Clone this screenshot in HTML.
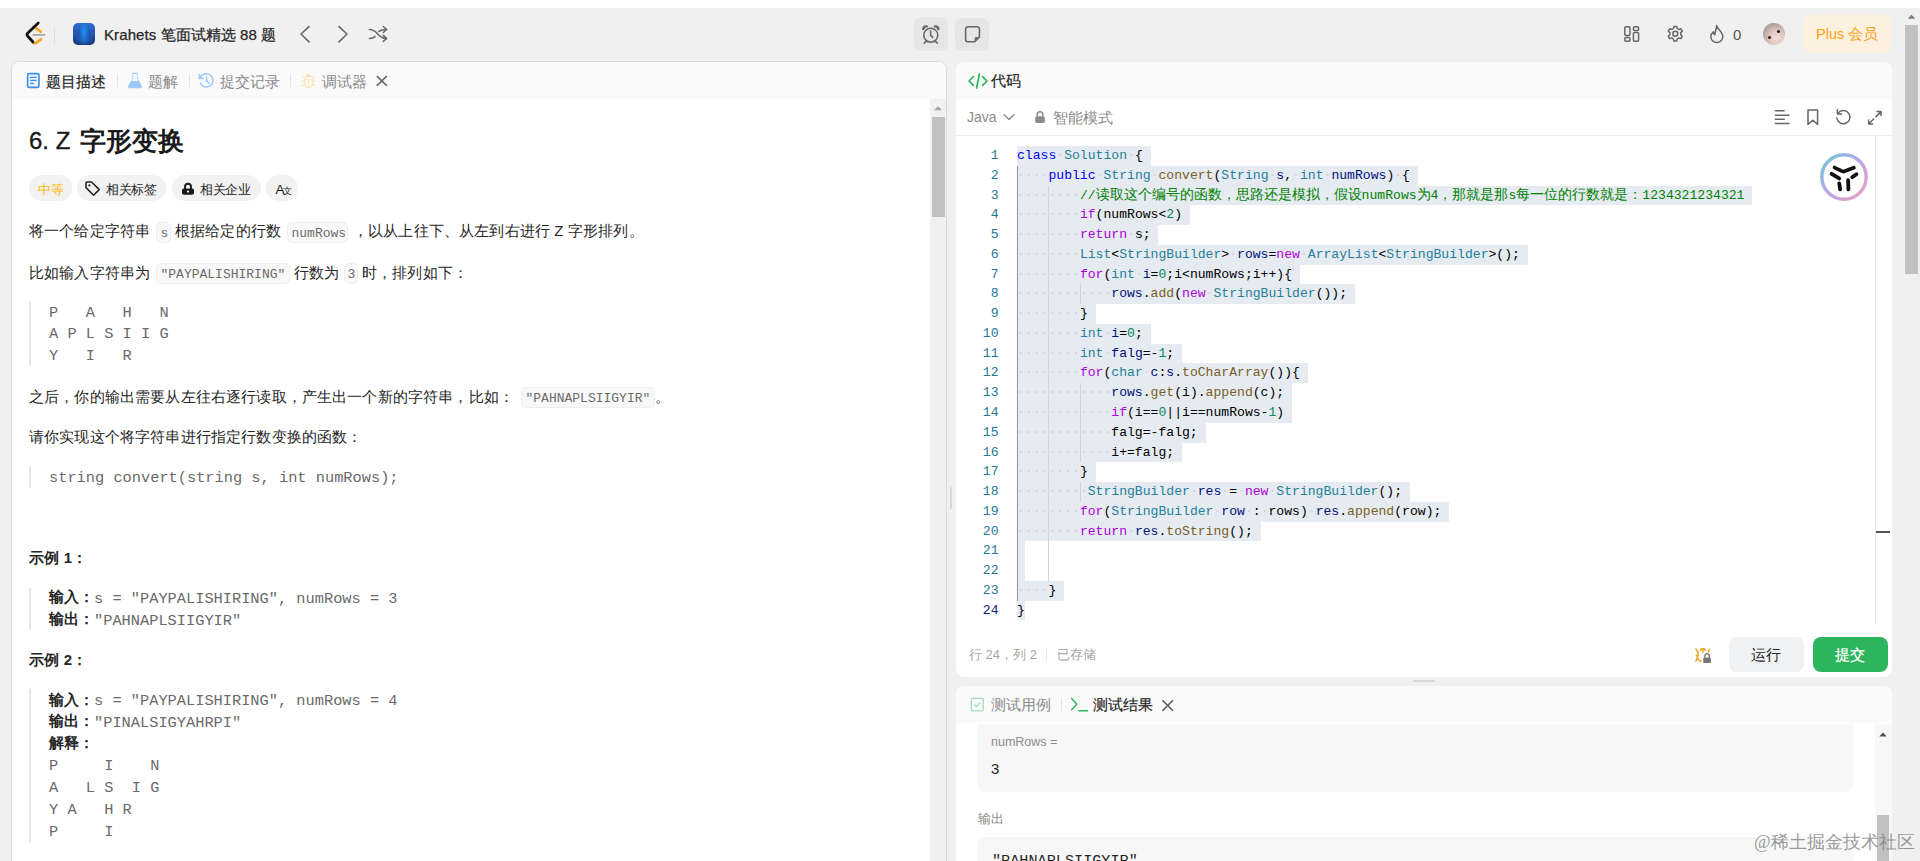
<!DOCTYPE html>
<html><head><meta charset="utf-8">
<style>
*{box-sizing:border-box;margin:0;padding:0}
html,body{width:1920px;height:861px;overflow:hidden}
body{background:#f0f0f0;font-family:"Liberation Sans",sans-serif;color:#262626;position:relative}
.abs{position:absolute}
.topstrip{left:0;top:0;width:1920px;height:8px;background:#fff}
.ico{position:absolute;overflow:visible}
.panel{position:absolute;background:#fff;border-radius:8px;overflow:hidden}
.phead{position:absolute;left:0;top:0;right:0;height:39px;background:#fafafa}
.t{position:absolute;white-space:pre;line-height:1}
.mono{font-family:"Liberation Mono",monospace}
.pill{position:absolute;height:26px;border-radius:14px;background:#f2f2f2}
.ic{position:absolute;height:20px;top:-3px;border-radius:5px;background:#f6f6f6;border:1px solid #ececec}
.pre{position:absolute;left:29px;width:2px;background:#e7e7e7}
.pt{position:absolute;left:49px;white-space:pre;font-family:"Liberation Mono",monospace;font-size:15.4px;color:#5e5e5e;line-height:21.8px}
.code{position:absolute;left:1017px;top:146px;font-family:"Liberation Mono",monospace;font-size:13.33px;line-height:19.78px;white-space:pre;color:#000}
.sel{position:absolute;background:#e5ebf1;height:19.77px}
.ln{position:absolute;left:960px;width:38.5px;text-align:right;font-family:"Liberation Mono",monospace;font-size:13.1px;line-height:19.77px;white-space:pre}
.cl{position:absolute;left:1017px;font-family:"Liberation Mono",monospace;font-size:13.1px;line-height:19.77px;white-space:pre;color:#000}
.ws{color:#ced2d7}
.cj{font-size:14px;line-height:1}
.c{display:inline-block;width:1em;font-style:normal}
.ls .c{width:calc(1em + .16px)}
.nocjk .c{-webkit-text-fill-color:transparent;-webkit-text-stroke:0;position:relative}
.nocjk .c::after{content:"";position:absolute;left:.09em;right:.09em;top:.08em;height:.84em;background:currentColor;opacity:.33}
.nocjk [style*="font-weight:bold"] .c::after{opacity:.5}
.nocjk .c.p::after{left:.12em;right:auto;width:.22em;top:.62em;height:.26em;opacity:.6}
</style></head><body>
<div class="abs topstrip"></div>

<!-- NAVBAR -->
<svg class="ico" style="left:0;top:0" width="60" height="60" viewBox="0 0 60 60">
 <path d="M33.8 26.6 L40.8 31.6" fill="none" stroke="#f2a725" stroke-width="2.7" stroke-linecap="round"/>
 <path d="M33 42.6 Q35 43.8 37 42.4 L41 39.2" fill="none" stroke="#f2a725" stroke-width="2.7" stroke-linecap="round"/>
 <path d="M38.2 23 L27.6 33.2 Q26.4 34.6 27.6 36 L33 42" fill="none" stroke="#111" stroke-width="2.7" stroke-linecap="round" stroke-linejoin="round"/>
 <path d="M33.2 34.9 H44.4" fill="none" stroke="#a8a8a8" stroke-width="1.8" stroke-linecap="round"/>
</svg>
<div class="abs" style="left:54px;top:27px;width:1px;height:18px;background:#dedede"></div>
<div class="abs" style="left:73px;top:23px;width:22px;height:22px;border-radius:5px;background:radial-gradient(ellipse 5px 11px at 50% 40%,rgba(30,150,255,.95),rgba(30,150,255,0)),radial-gradient(ellipse 10px 7px at 50% 78%,rgba(40,130,230,.6),rgba(40,130,230,0)),linear-gradient(180deg,#2c6fd0 0%,#1f52a8 55%,#14306f 100%)"></div>
<div class="t" style="left:104px;top:27px;font-size:15px;color:#262626;letter-spacing:.1px;-webkit-text-stroke:.25px #262626">Krahets <i class="c">笔</i><i class="c">面</i><i class="c">试</i><i class="c">精</i><i class="c">选</i> 88 <i class="c">题</i></div>
<svg class="ico" style="left:296px;top:22px" width="20" height="24" viewBox="0 0 20 24">
 <path d="M13 4.6 L5 12 L13 19.9" fill="none" stroke="#666" stroke-width="1.6" stroke-linecap="round" stroke-linejoin="round"/>
</svg>
<svg class="ico" style="left:334px;top:22px" width="20" height="24" viewBox="0 0 20 24">
 <path d="M5 4.6 L13 12 L5 19.9" fill="none" stroke="#666" stroke-width="1.6" stroke-linecap="round" stroke-linejoin="round"/>
</svg>
<svg class="ico" style="left:366px;top:22px" width="24" height="24" viewBox="0 0 24 24">
 <path d="M3.4 7.4 C7 7.4 9 8.6 11.5 11.75 C14 14.9 16 16.4 20.4 16.4" fill="none" stroke="#666" stroke-width="1.5" stroke-linecap="round"/>
 <path d="M3.4 16.4 C5.6 16.4 7.6 15.9 9 14.6 M12.9 9.4 C14.6 8 16.4 7.4 20.4 7.4" fill="none" stroke="#666" stroke-width="1.5" stroke-linecap="round"/>
 <path d="M17.3 4.5 L20.7 7.5 L17.3 10.5 M17.3 13.4 L20.7 16.4 L17.3 19.4" fill="none" stroke="#666" stroke-width="1.5" stroke-linecap="round" stroke-linejoin="round"/>
</svg>
<!-- timer + note -->
<div class="abs" style="left:914px;top:17px;width:34px;height:34px;border-radius:7px;background:#e6e6e6"></div>
<svg class="ico" style="left:918px;top:22px" width="26" height="24" viewBox="0 0 26 24">
 <circle cx="12.8" cy="13.2" r="7" fill="none" stroke="#666" stroke-width="1.6"/>
 <path d="M12.6 9 V13.2 L14.6 15.4" fill="none" stroke="#666" stroke-width="1.6" stroke-linecap="round" stroke-linejoin="round"/>
 <path d="M5.2 7 A3.2 3.2 0 0 1 8.8 4.4 M20.4 7 A3.2 3.2 0 0 0 16.8 4.4" fill="none" stroke="#666" stroke-width="2.4" stroke-linecap="round"/>
 <path d="M8.2 19.4 L6.2 21.2 M17.4 19.4 L19.4 21.2" stroke="#666" stroke-width="1.6" stroke-linecap="round"/>
</svg>
<div class="abs" style="left:955px;top:18px;width:34px;height:33px;border-radius:7px;background:#e6e6e6"></div>
<svg class="ico" style="left:962px;top:23px" width="21" height="22" viewBox="0 0 21 22">
 <path d="M5.8 3.8 H15.2 A2.2 2.2 0 0 1 17.4 6 V14 L12.6 18.8 H5.8 A2.2 2.2 0 0 1 3.6 16.6 V6 A2.2 2.2 0 0 1 5.8 3.8 Z" fill="none" stroke="#666" stroke-width="1.6" stroke-linejoin="round"/>
 <path d="M17.4 14 H14.4 A1.8 1.8 0 0 0 12.6 15.8 V18.8 Z" fill="#666"/>
</svg>
<!-- right nav icons -->
<svg class="ico" style="left:1621px;top:23px" width="22" height="22" viewBox="0 0 22 22">
 <rect x="3.8" y="3.8" width="5.2" height="8.6" rx="1.2" fill="none" stroke="#666" stroke-width="1.5"/>
 <rect x="3.8" y="14.6" width="5.2" height="3.6" rx="1.2" fill="none" stroke="#666" stroke-width="1.5"/>
 <rect x="12.4" y="3.8" width="5.2" height="3.6" rx="1.2" fill="none" stroke="#666" stroke-width="1.5"/>
 <rect x="12.4" y="9.6" width="5.2" height="8.6" rx="1.2" fill="none" stroke="#666" stroke-width="1.5"/>
</svg>
<svg class="ico" style="left:1664px;top:23px" width="22" height="22" viewBox="0 0 22 22">
 <g transform="translate(11.3 11) scale(0.78) translate(-12 -12)">
 <path d="M10.2 2.4 H13.8 L14.5 5.1 Q15.6 5.5 16.6 6.2 L19.2 5.3 L21 8.4 L18.9 10.3 Q19.1 11.5 18.9 12.9 L21 14.8 L19.2 17.9 L16.6 17 Q15.6 17.8 14.5 18.2 L13.8 20.9 H10.2 L9.5 18.2 Q8.4 17.8 7.4 17 L4.8 17.9 L3 14.8 L5.1 12.9 Q4.9 11.6 5.1 10.3 L3 8.4 L4.8 5.3 L7.4 6.2 Q8.4 5.5 9.5 5.1 Z" fill="none" stroke="#666" stroke-width="1.9" stroke-linejoin="round"/>
 <circle cx="12" cy="11.6" r="3.2" fill="none" stroke="#666" stroke-width="1.9"/>
 </g>
</svg>
<svg class="ico" style="left:1706px;top:23px" width="22" height="22" viewBox="0 0 22 22">
 <path d="M10.6 2.6 C11 6 16.8 8.6 16.8 13.6 A6 6 0 0 1 4.8 13.6 C4.8 11 6.4 9.6 7.4 8.8 C7.4 10.4 8 11.4 8.8 11.8 C9 8.4 10.6 5.6 10.6 2.6 Z" fill="none" stroke="#666" stroke-width="1.5" stroke-linejoin="round"/>
</svg>
<div class="t" style="left:1733px;top:27px;font-size:15px;color:#555">0</div>
<div class="abs" style="left:1763px;top:23px;width:22px;height:22px;border-radius:50%;background:radial-gradient(circle at 62% 68%,#f2dcd6 0%,#e2c8c0 35%,#a89c94 75%,#8e857f 100%);overflow:hidden">
 <div class="abs" style="left:5px;top:13px;width:3px;height:3px;border-radius:50%;background:#2a1a1a"></div>
 <div class="abs" style="left:14px;top:7px;width:3px;height:3px;border-radius:50%;background:#2a1a1a"></div>
</div>
<div class="abs" style="left:1803px;top:15px;width:88px;height:38px;border-radius:7px;background:#fcf0df"></div>
<div class="t" style="left:1816px;top:26.5px;font-size:14.5px;color:#ffa116">Plus <i class="c">会</i><i class="c">员</i></div>

<!-- LEFT PANEL -->
<div class="panel" style="left:11px;top:61px;width:936px;height:820px;border:1px solid #d9d9d9">
  <div class="phead" style="height:37px"></div>
</div>
<!-- left tabs -->
<svg class="ico" style="left:26px;top:72px" width="15" height="17" viewBox="0 0 15 17">
 <rect x="1.6" y="1.6" width="11.4" height="13.8" rx="1.6" fill="#e8f3ff" stroke="#3b8df0" stroke-width="1.6"/>
 <path d="M4.6 5.4 H10 M4.6 8.4 H10 M4.6 11.4 H7.4" stroke="#3b8df0" stroke-width="1.4" stroke-linecap="round"/>
</svg>
<div class="t" style="left:46px;top:74px;font-size:15px;color:#262626;-webkit-text-stroke:.2px #262626"><i class="c">题</i><i class="c">目</i><i class="c">描</i><i class="c">述</i></div>
<div class="abs" style="left:117px;top:74px;width:1px;height:13px;background:#e4e4e4"></div>
<svg class="ico" style="left:127px;top:72px" width="16" height="17" viewBox="0 0 16 17">
 <path d="M5.4 1.4 H10.6 M6.2 1.4 V6.2 L1.8 14 A1.4 1.4 0 0 0 3 15.6 H13 A1.4 1.4 0 0 0 14.2 14 L9.8 6.2 V1.4" fill="#9ccaf8" stroke="#9ccaf8" stroke-width="1.4" stroke-linejoin="round"/>
 <path d="M6.2 2 V6.2 L4.6 9 H11.4 L9.8 6.2 V2 Z" fill="#fafafa"/>
</svg>
<div class="t" style="left:148px;top:74px;font-size:15px;color:#8a8a8a"><i class="c">题</i><i class="c">解</i></div>
<div class="abs" style="left:189px;top:74px;width:1px;height:13px;background:#e4e4e4"></div>
<svg class="ico" style="left:198px;top:72px" width="17" height="17" viewBox="0 0 17 17">
 <path d="M2.6 5.2 A6.6 6.6 0 1 1 2.4 11" fill="none" stroke="#9ccaf8" stroke-width="1.6" stroke-linecap="round"/>
 <path d="M1.4 2.6 V6.4 H5.2" fill="none" stroke="#9ccaf8" stroke-width="1.6" stroke-linecap="round" stroke-linejoin="round"/>
 <path d="M8.6 5 V8.8 L11 11" fill="none" stroke="#9ccaf8" stroke-width="1.6" stroke-linecap="round"/>
</svg>
<div class="t" style="left:220px;top:74px;font-size:15px;color:#8a8a8a"><i class="c">提</i><i class="c">交</i><i class="c">记</i><i class="c">录</i></div>
<div class="abs" style="left:290px;top:74px;width:1px;height:13px;background:#e4e4e4"></div>
<svg class="ico" style="left:300px;top:72px" width="17" height="17" viewBox="0 0 17 17">
 <path d="M5.6 5.2 A2.9 2.9 0 0 1 11.4 5.2 Z" fill="#fbe2b4"/>
 <path d="M4.6 7.6 H12.4 V11.4 A3.9 3.9 0 0 1 4.6 11.4 Z" fill="none" stroke="#fbe6bf" stroke-width="1.4"/>
 <path d="M1.8 9.4 H4 M13 9.4 H15.2 M2 13.8 L4.2 12.6 M15 13.8 L12.8 12.6 M2.8 4.4 L4.6 6.4 M14.2 4.4 L12.4 6.4 M8.5 8 V14" stroke="#fbe6bf" stroke-width="1.3" stroke-linecap="round"/>
</svg>
<div class="t" style="left:322px;top:74px;font-size:15px;color:#8a8a8a"><i class="c">调</i><i class="c">试</i><i class="c">器</i></div>
<svg class="ico" style="left:374px;top:73px" width="16" height="16" viewBox="0 0 16 16">
 <path d="M3.2 3.4 L12.4 12.4 M12.4 3.4 L3.2 12.4" stroke="#666" stroke-width="1.5" stroke-linecap="round"/>
</svg>

<!-- left scrollbar -->
<div class="abs" style="left:930px;top:99px;width:16px;height:762px;background:#f0f0f0"></div>
<svg class="ico" style="left:930px;top:103px" width="16" height="10" viewBox="0 0 16 10"><path d="M4 7.2 L8 3.2 L12 7.2 Z" fill="#a3a3a3"/></svg>
<div class="abs" style="left:932px;top:117px;width:13px;height:100px;background:#c1c1c1"></div>

<!-- title -->
<div class="t" style="left:29px;top:129px;font-size:24px;color:#1a1a1a;-webkit-text-stroke:.35px #1a1a1a">6. Z</div>
<div class="t" style="left:80px;top:128px;font-size:26px;font-weight:bold;color:#1a1a1a"><i class="c">字</i><i class="c">形</i><i class="c">变</i><i class="c">换</i></div>
<!-- tags -->
<div class="pill" style="left:29px;top:175px;width:43px"></div>
<div class="t" style="left:38px;top:184px;font-size:12.5px;color:#ffb800"><i class="c">中</i><i class="c">等</i></div>
<div class="pill" style="left:77px;top:175px;width:89px"></div>
<svg class="ico" style="left:84px;top:180px" width="18" height="17" viewBox="0 0 18 17">
 <path d="M2 2.6 V7.6 L9.6 15.2 L15.2 9.6 L7.6 2 H2.6 Z" fill="none" stroke="#262626" stroke-width="1.6" stroke-linejoin="round"/>
 <circle cx="5.4" cy="5.4" r="1.1" fill="#262626"/>
</svg>
<div class="t" style="left:106px;top:184px;font-size:12.5px;color:#262626"><i class="c">相</i><i class="c">关</i><i class="c">标</i><i class="c">签</i></div>
<div class="pill" style="left:172px;top:175px;width:89px"></div>
<svg class="ico" style="left:181px;top:180px" width="14" height="17" viewBox="0 0 14 17">
 <path d="M4 9 V6.8 A3 3 0 0 1 10 6.8 V9" fill="none" stroke="#1a1a1a" stroke-width="1.9"/>
 <rect x="1" y="8.4" width="12" height="6.4" rx="1.8" fill="#1a1a1a"/>
 <circle cx="7" cy="11.6" r="1.1" fill="#f2f2f2"/>
</svg>
<div class="t" style="left:200px;top:184px;font-size:12.5px;color:#262626"><i class="c">相</i><i class="c">关</i><i class="c">企</i><i class="c">业</i></div>
<div class="pill" style="left:266px;top:175px;width:32px"></div>
<div class="t" style="left:275.5px;top:183px;font-size:13.5px;color:#1a1a1a;letter-spacing:-1.5px">A<span style="font-size:9px;position:relative;top:0"><i class="c">文</i></span></div>

<!-- paragraphs -->
<div class="t ls" style="left:29px;top:223.2px;font-size:15px;color:#262626;font-weight:normal;letter-spacing:.16px;"><i class="c">将</i><i class="c">一</i><i class="c">个</i><i class="c">给</i><i class="c">定</i><i class="c">字</i><i class="c">符</i><i class="c">串</i></div>
<div class="abs" style="left:156px;top:222px;width:15px;height:21px;border-radius:5px;background:#f8f8f8;border:1px solid #eeeeee"></div>
<div class="t" style="left:160.5px;top:226.5px;font-size:13px;color:#6b6b6b;font-weight:normal;font-family:'Liberation Mono',monospace;">s</div>
<div class="t ls" style="left:175px;top:223.2px;font-size:15px;color:#262626;font-weight:normal;letter-spacing:.16px;"><i class="c">根</i><i class="c">据</i><i class="c">给</i><i class="c">定</i><i class="c">的</i><i class="c">行</i><i class="c">数</i></div>
<div class="abs" style="left:287px;top:222px;width:61px;height:21px;border-radius:5px;background:#f8f8f8;border:1px solid #eeeeee"></div>
<div class="t" style="left:291.5px;top:226.5px;font-size:13px;color:#6b6b6b;font-weight:normal;font-family:'Liberation Mono',monospace;">numRows</div>
<div class="t ls" style="left:353px;top:223.2px;font-size:15px;color:#262626;font-weight:normal;letter-spacing:.16px;"><i class="c p">，</i><i class="c">以</i><i class="c">从</i><i class="c">上</i><i class="c">往</i><i class="c">下</i><i class="c p">、</i><i class="c">从</i><i class="c">左</i><i class="c">到</i><i class="c">右</i><i class="c">进</i><i class="c">行</i> Z <i class="c">字</i><i class="c">形</i><i class="c">排</i><i class="c">列</i><i class="c p">。</i></div>
<div class="t ls" style="left:29px;top:264.7px;font-size:15px;color:#262626;font-weight:normal;letter-spacing:.16px;"><i class="c">比</i><i class="c">如</i><i class="c">输</i><i class="c">入</i><i class="c">字</i><i class="c">符</i><i class="c">串</i><i class="c">为</i></div>
<div class="abs" style="left:156px;top:263px;width:134px;height:21px;border-radius:5px;background:#f8f8f8;border:1px solid #eeeeee"></div>
<div class="t" style="left:160.5px;top:268.0px;font-size:13px;color:#6b6b6b;font-weight:normal;font-family:'Liberation Mono',monospace;">"PAYPALISHIRING"</div>
<div class="t ls" style="left:293.5px;top:264.7px;font-size:15px;color:#262626;font-weight:normal;letter-spacing:.16px;"><i class="c">行</i><i class="c">数</i><i class="c">为</i></div>
<div class="abs" style="left:344px;top:263px;width:14px;height:21px;border-radius:5px;background:#f8f8f8;border:1px solid #eeeeee"></div>
<div class="t" style="left:347.5px;top:268.0px;font-size:13px;color:#6b6b6b;font-weight:normal;font-family:'Liberation Mono',monospace;">3</div>
<div class="t ls" style="left:362px;top:264.7px;font-size:15px;color:#262626;font-weight:normal;letter-spacing:.16px;"><i class="c">时</i><i class="c p">，</i><i class="c">排</i><i class="c">列</i><i class="c">如</i><i class="c">下</i><i class="c p">：</i></div>
<div class="pre" style="top:302px;height:64px"></div>
<div class="t" style="left:49px;top:305.5px;font-size:15.33px;color:#6a6a6a;font-weight:normal;font-family:'Liberation Mono',monospace;">P   A   H   N</div>
<div class="t" style="left:49px;top:327.2px;font-size:15.33px;color:#6a6a6a;font-weight:normal;font-family:'Liberation Mono',monospace;">A P L S I I G</div>
<div class="t" style="left:49px;top:349.0px;font-size:15.33px;color:#6a6a6a;font-weight:normal;font-family:'Liberation Mono',monospace;">Y   I   R</div>
<div class="t ls" style="left:29px;top:388.7px;font-size:15px;color:#262626;font-weight:normal;letter-spacing:.16px;"><i class="c">之</i><i class="c">后</i><i class="c p">，</i><i class="c">你</i><i class="c">的</i><i class="c">输</i><i class="c">出</i><i class="c">需</i><i class="c">要</i><i class="c">从</i><i class="c">左</i><i class="c">往</i><i class="c">右</i><i class="c">逐</i><i class="c">行</i><i class="c">读</i><i class="c">取</i><i class="c p">，</i><i class="c">产</i><i class="c">生</i><i class="c">出</i><i class="c">一</i><i class="c">个</i><i class="c">新</i><i class="c">的</i><i class="c">字</i><i class="c">符</i><i class="c">串</i><i class="c p">，</i><i class="c">比</i><i class="c">如</i><i class="c p">：</i></div>
<div class="abs" style="left:521px;top:387px;width:134px;height:21px;border-radius:5px;background:#f8f8f8;border:1px solid #eeeeee"></div>
<div class="t" style="left:525.5px;top:392.0px;font-size:13px;color:#6b6b6b;font-weight:normal;font-family:'Liberation Mono',monospace;">"PAHNAPLSIIGYIR"</div>
<div class="t ls" style="left:655px;top:388.7px;font-size:15px;color:#262626;font-weight:normal;letter-spacing:.16px;"><i class="c p">。</i></div>
<div class="t ls" style="left:29px;top:429.4px;font-size:15px;color:#262626;font-weight:normal;letter-spacing:.16px;"><i class="c">请</i><i class="c">你</i><i class="c">实</i><i class="c">现</i><i class="c">这</i><i class="c">个</i><i class="c">将</i><i class="c">字</i><i class="c">符</i><i class="c">串</i><i class="c">进</i><i class="c">行</i><i class="c">指</i><i class="c">定</i><i class="c">行</i><i class="c">数</i><i class="c">变</i><i class="c">换</i><i class="c">的</i><i class="c">函</i><i class="c">数</i><i class="c p">：</i></div>
<div class="pre" style="top:466px;height:22px"></div>
<div class="t" style="left:49px;top:471.0px;font-size:15.33px;color:#6a6a6a;font-weight:normal;font-family:'Liberation Mono',monospace;">string convert(string s, int numRows);</div>
<div class="t ls" style="left:29px;top:550.3px;font-size:15px;color:#262626;font-weight:bold;letter-spacing:.16px;"><i class="c">示</i><i class="c">例</i> 1<i class="c p">：</i></div>
<div class="pre" style="top:588px;height:42px"></div>
<div class="t ls" style="left:49px;top:589.4px;font-size:15px;color:#262626;font-weight:bold;letter-spacing:.16px;"><i class="c">输</i><i class="c">入</i><i class="c p">：</i></div>
<div class="t" style="left:94px;top:591.7px;font-size:15.33px;color:#6a6a6a;font-weight:normal;font-family:'Liberation Mono',monospace;">s = "PAYPALISHIRING", numRows = 3</div>
<div class="t ls" style="left:49px;top:611.3px;font-size:15px;color:#262626;font-weight:bold;letter-spacing:.16px;"><i class="c">输</i><i class="c">出</i><i class="c p">：</i></div>
<div class="t" style="left:94px;top:613.6px;font-size:15.33px;color:#6a6a6a;font-weight:normal;font-family:'Liberation Mono',monospace;">"PAHNAPLSIIGYIR"</div>
<div class="t ls" style="left:29px;top:652.2px;font-size:15px;color:#262626;font-weight:bold;letter-spacing:.16px;"><i class="c">示</i><i class="c">例</i> 2<i class="c p">：</i></div>
<div class="pre" style="top:689px;height:153px"></div>
<div class="t ls" style="left:49px;top:691.7px;font-size:15px;color:#262626;font-weight:bold;letter-spacing:.16px;"><i class="c">输</i><i class="c">入</i><i class="c p">：</i></div>
<div class="t" style="left:94px;top:694.0px;font-size:15.33px;color:#6a6a6a;font-weight:normal;font-family:'Liberation Mono',monospace;">s = "PAYPALISHIRING", numRows = 4</div>
<div class="t ls" style="left:49px;top:713.3px;font-size:15px;color:#262626;font-weight:bold;letter-spacing:.16px;"><i class="c">输</i><i class="c">出</i><i class="c p">：</i></div>
<div class="t" style="left:94px;top:715.6px;font-size:15.33px;color:#6a6a6a;font-weight:normal;font-family:'Liberation Mono',monospace;">"PINALSIGYAHRPI"</div>
<div class="t ls" style="left:49px;top:734.9px;font-size:15px;color:#262626;font-weight:bold;letter-spacing:.16px;"><i class="c">解</i><i class="c">释</i><i class="c p">：</i></div>
<div class="t" style="left:49px;top:759.2px;font-size:15.33px;color:#6a6a6a;font-weight:normal;font-family:'Liberation Mono',monospace;">P     I    N</div>
<div class="t" style="left:49px;top:781.1px;font-size:15.33px;color:#6a6a6a;font-weight:normal;font-family:'Liberation Mono',monospace;">A   L S  I G</div>
<div class="t" style="left:49px;top:803.0px;font-size:15.33px;color:#6a6a6a;font-weight:normal;font-family:'Liberation Mono',monospace;">Y A   H R</div>
<div class="t" style="left:49px;top:824.9px;font-size:15.33px;color:#6a6a6a;font-weight:normal;font-family:'Liberation Mono',monospace;">P     I</div>

<!-- RIGHT TOP PANEL -->
<div class="panel" style="left:956px;top:62px;width:936px;height:615px">
  <div class="phead" style="height:37px"></div>
  <div class="abs" style="left:0;top:73px;width:936px;height:1px;background:#ededed"></div>
</div>
<svg class="ico" style="left:966px;top:72px" width="24" height="18" viewBox="0 0 24 18">
 <path d="M7.4 4.6 L3 9 L7.4 13.4 M16.6 4.6 L21 9 L16.6 13.4" fill="none" stroke="#2db55d" stroke-width="1.7" stroke-linecap="round" stroke-linejoin="round"/>
 <path d="M13.4 2 L10.6 16" stroke="#2db55d" stroke-width="1.7" stroke-linecap="round"/>
</svg>
<div class="t" style="left:991px;top:73px;font-size:15px;color:#262626;-webkit-text-stroke:.2px #262626"><i class="c">代</i><i class="c">码</i></div>
<div class="t" style="left:967px;top:110px;font-size:14px;color:#8c8c8c">Java</div>
<svg class="ico" style="left:1002px;top:112px" width="14" height="10" viewBox="0 0 14 10"><path d="M2 2.8 L7 7.6 L12 2.8" fill="none" stroke="#8c8c8c" stroke-width="1.4" stroke-linecap="round" stroke-linejoin="round"/></svg>
<svg class="ico" style="left:1034px;top:110px" width="12" height="14" viewBox="0 0 12 14">
 <path d="M3.2 6.4 V4.6 A2.8 2.8 0 0 1 8.8 4.6 V6.4" fill="none" stroke="#8c8c8c" stroke-width="1.6"/>
 <rect x="1.2" y="6.2" width="9.6" height="6.8" rx="1.6" fill="#8c8c8c"/>
</svg>
<div class="t" style="left:1053px;top:110px;font-size:15px;color:#8c8c8c"><i class="c">智</i><i class="c">能</i><i class="c">模</i><i class="c">式</i></div>
<svg class="ico" style="left:1772px;top:107px" width="20" height="20" viewBox="0 0 20 20">
 <path d="M3.4 3.8 H12.2 M3.4 8.2 H17 M3.4 12.3 H12.2 M3.4 16.4 H17" stroke="#666" stroke-width="1.5" stroke-linecap="round"/>
</svg>
<svg class="ico" style="left:1803px;top:107px" width="20" height="20" viewBox="0 0 20 20">
 <path d="M5 3 H14.6 V17.4 L9.8 13.2 L5 17.4 Z" fill="none" stroke="#666" stroke-width="1.5" stroke-linejoin="round"/>
</svg>
<svg class="ico" style="left:1833px;top:107px" width="20" height="20" viewBox="0 0 20 20">
 <path d="M5.2 6 A6.6 6.6 0 1 1 3.8 11" fill="none" stroke="#666" stroke-width="1.5" stroke-linecap="round"/>
 <path d="M4.4 2.8 V7 H8.6" fill="none" stroke="#666" stroke-width="1.5" stroke-linecap="round" stroke-linejoin="round"/>
</svg>
<svg class="ico" style="left:1865px;top:108px" width="20" height="20" viewBox="0 0 20 20">
 <path d="M11 8.6 L16 3.6 M12 3.6 H16 V7.6 M8.6 11 L3.6 16 M3.6 12 V16 H7.6" fill="none" stroke="#666" stroke-width="1.5" stroke-linecap="round" stroke-linejoin="round"/>
</svg>
<!-- editor -->
<div class="abs" style="left:1875px;top:136px;width:1px;height:489px;background:#e6e6e6"></div>
<div class="abs" style="left:1876px;top:531px;width:14px;height:2px;background:#555"></div>
<!-- CODE START -->
<div class="sel" style="left:1017px;top:146.00px;width:133.6px"></div>
<div class="sel" style="left:1017px;top:165.77px;width:400.7px"></div>
<div class="sel" style="left:1017px;top:185.54px;width:735.3px"></div>
<div class="sel" style="left:1017px;top:205.31px;width:172.9px"></div>
<div class="sel" style="left:1017px;top:225.08px;width:141.4px"></div>
<div class="sel" style="left:1017px;top:244.85px;width:510.7px"></div>
<div class="sel" style="left:1017px;top:264.62px;width:282.9px"></div>
<div class="sel" style="left:1017px;top:284.39px;width:337.9px"></div>
<div class="sel" style="left:1017px;top:304.16px;width:78.6px"></div>
<div class="sel" style="left:1017px;top:323.93px;width:133.6px"></div>
<div class="sel" style="left:1017px;top:343.70px;width:165.0px"></div>
<div class="sel" style="left:1017px;top:363.47px;width:290.7px"></div>
<div class="sel" style="left:1017px;top:383.24px;width:275.0px"></div>
<div class="sel" style="left:1017px;top:403.01px;width:275.0px"></div>
<div class="sel" style="left:1017px;top:422.78px;width:188.6px"></div>
<div class="sel" style="left:1017px;top:442.55px;width:165.0px"></div>
<div class="sel" style="left:1017px;top:462.32px;width:78.6px"></div>
<div class="sel" style="left:1017px;top:482.09px;width:392.9px"></div>
<div class="sel" style="left:1017px;top:501.86px;width:432.1px"></div>
<div class="sel" style="left:1017px;top:521.63px;width:243.6px"></div>
<div class="sel" style="left:1017px;top:541.40px;width:7.9px"></div>
<div class="sel" style="left:1017px;top:561.17px;width:7.9px"></div>
<div class="sel" style="left:1017px;top:580.94px;width:47.1px"></div>
<div class="sel" style="left:1017px;top:600.71px;width:7.9px"></div>
<div class="abs" style="left:1017.0px;top:165.77px;width:1px;height:434.94px;background:#939393"></div>
<div class="abs" style="left:1048.4px;top:185.54px;width:1px;height:395.40px;background:#d3d3d3"></div>
<div class="abs" style="left:1079.9px;top:284.39px;width:1px;height:19.77px;background:#d3d3d3"></div>
<div class="abs" style="left:1079.9px;top:383.24px;width:1px;height:79.08px;background:#d3d3d3"></div>
<div class="abs" style="left:1079.9px;top:482.09px;width:1px;height:19.77px;background:#d3d3d3"></div>
<div class="ln" style="top:146.00px;color:#237893">1</div>
<div class="ln" style="top:165.77px;color:#237893">2</div>
<div class="ln" style="top:185.54px;color:#237893">3</div>
<div class="ln" style="top:205.31px;color:#237893">4</div>
<div class="ln" style="top:225.08px;color:#237893">5</div>
<div class="ln" style="top:244.85px;color:#237893">6</div>
<div class="ln" style="top:264.62px;color:#237893">7</div>
<div class="ln" style="top:284.39px;color:#237893">8</div>
<div class="ln" style="top:304.16px;color:#237893">9</div>
<div class="ln" style="top:323.93px;color:#237893">10</div>
<div class="ln" style="top:343.70px;color:#237893">11</div>
<div class="ln" style="top:363.47px;color:#237893">12</div>
<div class="ln" style="top:383.24px;color:#237893">13</div>
<div class="ln" style="top:403.01px;color:#237893">14</div>
<div class="ln" style="top:422.78px;color:#237893">15</div>
<div class="ln" style="top:442.55px;color:#237893">16</div>
<div class="ln" style="top:462.32px;color:#237893">17</div>
<div class="ln" style="top:482.09px;color:#237893">18</div>
<div class="ln" style="top:501.86px;color:#237893">19</div>
<div class="ln" style="top:521.63px;color:#237893">20</div>
<div class="ln" style="top:541.40px;color:#237893">21</div>
<div class="ln" style="top:561.17px;color:#237893">22</div>
<div class="ln" style="top:580.94px;color:#237893">23</div>
<div class="ln" style="top:600.71px;color:#0b216f">24</div>
<div class="cl" style="top:146.00px"><span style="color:#0000ff">class</span><span class="ws">·</span><span style="color:#267f99">Solution</span><span class="ws">·</span><span style="color:#000000">{</span></div>
<div class="cl" style="top:165.77px"><span class="ws">····</span><span style="color:#0000ff">public</span><span class="ws">·</span><span style="color:#267f99">String</span><span class="ws">·</span><span style="color:#795e26">convert</span><span style="color:#000000">(</span><span style="color:#267f99">String</span><span class="ws">·</span><span style="color:#001080">s</span><span style="color:#000000">,</span><span class="ws">·</span><span style="color:#267f99">int</span><span class="ws">·</span><span style="color:#001080">numRows</span><span style="color:#000000">)</span><span class="ws">·</span><span style="color:#000000">{</span></div>
<div class="cl" style="top:185.54px"><span class="ws">········</span><span style="color:#008000">//<span class="cj"><i class="c">读</i><i class="c">取</i><i class="c">这</i><i class="c">个</i><i class="c">编</i><i class="c">号</i><i class="c">的</i><i class="c">函</i><i class="c">数</i><i class="c p">，</i><i class="c">思</i><i class="c">路</i><i class="c">还</i><i class="c">是</i><i class="c">模</i><i class="c">拟</i><i class="c p">，</i><i class="c">假</i><i class="c">设</i></span>numRows<span class="cj"><i class="c">为</i></span>4<span class="cj"><i class="c p">，</i><i class="c">那</i><i class="c">就</i><i class="c">是</i><i class="c">那</i></span>s<span class="cj"><i class="c">每</i><i class="c">一</i><i class="c">位</i><i class="c">的</i><i class="c">行</i><i class="c">数</i><i class="c">就</i><i class="c">是</i><i class="c p">：</i></span>1234321234321</span></div>
<div class="cl" style="top:205.31px"><span class="ws">········</span><span style="color:#af00db">if</span><span style="color:#000000">(numRows&lt;</span><span style="color:#098658">2</span><span style="color:#000000">)</span></div>
<div class="cl" style="top:225.08px"><span class="ws">········</span><span style="color:#af00db">return</span><span class="ws">·</span><span style="color:#000000">s;</span></div>
<div class="cl" style="top:244.85px"><span class="ws">········</span><span style="color:#267f99">List</span><span style="color:#000000">&lt;</span><span style="color:#267f99">StringBuilder</span><span style="color:#000000">&gt;</span><span class="ws">·</span><span style="color:#001080">rows</span><span style="color:#000000">=</span><span style="color:#af00db">new</span><span class="ws">·</span><span style="color:#267f99">ArrayList</span><span style="color:#000000">&lt;</span><span style="color:#267f99">StringBuilder</span><span style="color:#000000">&gt;();</span></div>
<div class="cl" style="top:264.62px"><span class="ws">········</span><span style="color:#af00db">for</span><span style="color:#000000">(</span><span style="color:#267f99">int</span><span class="ws">·</span><span style="color:#001080">i</span><span style="color:#000000">=</span><span style="color:#098658">0</span><span style="color:#000000">;i&lt;numRows;i++){</span></div>
<div class="cl" style="top:284.39px"><span class="ws">············</span><span style="color:#001080">rows</span><span style="color:#000000">.</span><span style="color:#795e26">add</span><span style="color:#000000">(</span><span style="color:#af00db">new</span><span class="ws">·</span><span style="color:#267f99">StringBuilder</span><span style="color:#000000">());</span></div>
<div class="cl" style="top:304.16px"><span class="ws">········</span><span style="color:#000000">}</span></div>
<div class="cl" style="top:323.93px"><span class="ws">········</span><span style="color:#267f99">int</span><span class="ws">·</span><span style="color:#001080">i</span><span style="color:#000000">=</span><span style="color:#098658">0</span><span style="color:#000000">;</span></div>
<div class="cl" style="top:343.70px"><span class="ws">········</span><span style="color:#267f99">int</span><span class="ws">·</span><span style="color:#001080">falg</span><span style="color:#000000">=-</span><span style="color:#098658">1</span><span style="color:#000000">;</span></div>
<div class="cl" style="top:363.47px"><span class="ws">········</span><span style="color:#af00db">for</span><span style="color:#000000">(</span><span style="color:#267f99">char</span><span class="ws">·</span><span style="color:#001080">c</span><span style="color:#000000">:</span><span style="color:#001080">s</span><span style="color:#000000">.</span><span style="color:#795e26">toCharArray</span><span style="color:#000000">()){</span></div>
<div class="cl" style="top:383.24px"><span class="ws">············</span><span style="color:#001080">rows</span><span style="color:#000000">.</span><span style="color:#795e26">get</span><span style="color:#000000">(i).</span><span style="color:#795e26">append</span><span style="color:#000000">(c);</span></div>
<div class="cl" style="top:403.01px"><span class="ws">············</span><span style="color:#af00db">if</span><span style="color:#000000">(i==</span><span style="color:#098658">0</span><span style="color:#000000">||i==numRows-</span><span style="color:#098658">1</span><span style="color:#000000">)</span></div>
<div class="cl" style="top:422.78px"><span class="ws">············</span><span style="color:#000000">falg=-falg;</span></div>
<div class="cl" style="top:442.55px"><span class="ws">············</span><span style="color:#000000">i+=falg;</span></div>
<div class="cl" style="top:462.32px"><span class="ws">········</span><span style="color:#000000">}</span></div>
<div class="cl" style="top:482.09px"><span class="ws">·········</span><span style="color:#267f99">StringBuilder</span><span class="ws">·</span><span style="color:#001080">res</span><span class="ws">·</span><span style="color:#000000">=</span><span class="ws">·</span><span style="color:#af00db">new</span><span class="ws">·</span><span style="color:#267f99">StringBuilder</span><span style="color:#000000">();</span></div>
<div class="cl" style="top:501.86px"><span class="ws">········</span><span style="color:#af00db">for</span><span style="color:#000000">(</span><span style="color:#267f99">StringBuilder</span><span class="ws">·</span><span style="color:#001080">row</span><span class="ws">·</span><span style="color:#000000">:</span><span class="ws">·</span><span style="color:#000000">rows)</span><span class="ws">·</span><span style="color:#001080">res</span><span style="color:#000000">.</span><span style="color:#795e26">append</span><span style="color:#000000">(row);</span></div>
<div class="cl" style="top:521.63px"><span class="ws">········</span><span style="color:#af00db">return</span><span class="ws">·</span><span style="color:#001080">res</span><span style="color:#000000">.</span><span style="color:#795e26">toString</span><span style="color:#000000">();</span></div>
<div class="cl" style="top:541.40px"></div>
<div class="cl" style="top:561.17px"></div>
<div class="cl" style="top:580.94px"><span class="ws">····</span><span style="color:#000000">}</span></div>
<div class="cl" style="top:600.71px"><span style="color:#000000">}</span></div>
<!-- CODE END -->
<!-- AI icon -->
<svg class="ico" style="left:1818px;top:151px" width="52" height="52" viewBox="0 0 52 52">
 <defs><linearGradient id="ring" x1="0" y1="0" x2="1" y2="1"><stop offset="0" stop-color="#6ec9d6"/><stop offset=".5" stop-color="#b8a6e8"/><stop offset="1" stop-color="#f0a0c0"/></linearGradient></defs>
 <circle cx="26" cy="26" r="22.2" fill="#fff" stroke="url(#ring)" stroke-width="3.4"/>
 <path d="M16.6 16.6 L23.4 19.9 M25.8 20.5 L35.8 16.8 M13.6 22.8 L21.2 27.4 M34.2 26.2 L38.4 23.2 M21.2 32.4 L22.2 38.4 M30.1 29.2 L30.4 38.4" stroke="#111" stroke-width="3.8" stroke-linecap="round"/>
</svg>
<!-- footer -->
<div class="t" style="left:969px;top:648px;font-size:13px;color:#a6a6a6"><i class="c">行</i> 24<i class="c p">，</i><i class="c">列</i> 2</div>
<div class="abs" style="left:1046px;top:648px;width:1px;height:13px;background:#e8e8e8"></div>
<div class="t" style="left:1057px;top:648px;font-size:13px;color:#a6a6a6"><i class="c">已</i><i class="c">存</i><i class="c">储</i></div>
<svg class="ico" style="left:1693px;top:645px" width="20" height="20" viewBox="0 0 20 20">
 <path d="M7 5.8 A3 3 0 0 1 13 5.8 Z" fill="#f5a524"/>
 <path d="M10 5.8 V8" stroke="#f5a524" stroke-width="1.4"/>
 <path d="M3 4.2 L5.4 7.8 L4.8 11.6 L3 16 M5.2 14.4 L7.8 16.4 M3.2 10.6 H5" fill="none" stroke="#f5a524" stroke-width="1.6" stroke-linecap="round" stroke-linejoin="round"/>
 <path d="M16.4 4.4 L15.4 7" stroke="#f5a524" stroke-width="1.5" stroke-linecap="round"/>
 <path d="M11.9 12.8 V10.8 A2.2 2.2 0 0 1 16.3 10.8 V12.8" fill="none" stroke="#777" stroke-width="1.4"/>
 <rect x="10.3" y="12.6" width="7.6" height="5.4" rx="1" fill="#777"/>
</svg>
<div class="abs" style="left:1729px;top:637px;width:75px;height:35px;border-radius:8px;background:#f0f1f3"></div>
<div class="t" style="left:1751px;top:647px;font-size:15px;color:#262626"><i class="c">运</i><i class="c">行</i></div>
<div class="abs" style="left:1813px;top:637px;width:75px;height:35px;border-radius:8px;background:#2db55d"></div>
<div class="t" style="left:1835px;top:647px;font-size:15px;color:#fff;-webkit-text-stroke:.2px #fff"><i class="c">提</i><i class="c">交</i></div>
<!-- splitter handle -->
<div class="abs" style="left:1413px;top:680px;width:22px;height:2px;border-radius:1px;background:#d9d9d9"></div>
<div class="abs" style="left:950px;top:487px;width:2px;height:22px;border-radius:1px;background:#d9d9d9"></div>

<!-- RIGHT BOTTOM PANEL -->
<div class="panel" style="left:956px;top:686px;width:936px;height:200px">
  <div class="phead" style="height:37px"></div>
</div>
<svg class="ico" style="left:969px;top:696px" width="17" height="17" viewBox="0 0 17 17">
 <rect x="2.4" y="2.4" width="11.8" height="12.4" rx="1.4" fill="none" stroke="#a3d9b6" stroke-width="1.3"/>
 <path d="M5.6 8.8 L7.6 10.6 L11 7" fill="none" stroke="#a3d9b6" stroke-width="1.2" stroke-linecap="round" stroke-linejoin="round"/>
</svg>
<div class="t" style="left:991px;top:697px;font-size:15px;color:#8a8a8a"><i class="c">测</i><i class="c">试</i><i class="c">用</i><i class="c">例</i></div>
<div class="abs" style="left:1061px;top:698px;width:1px;height:13px;background:#e4e4e4"></div>
<svg class="ico" style="left:1068px;top:695px" width="22" height="19" viewBox="0 0 22 19">
 <path d="M3.6 3.6 L8.8 9.2 L3.6 14.8" fill="none" stroke="#2db55d" stroke-width="1.5" stroke-linecap="round" stroke-linejoin="round"/>
 <path d="M10.8 15.8 H19.4" stroke="#2db55d" stroke-width="1.5" stroke-linecap="round"/>
</svg>
<div class="t" style="left:1093px;top:697px;font-size:15px;color:#262626;-webkit-text-stroke:.2px #262626"><i class="c">测</i><i class="c">试</i><i class="c">结</i><i class="c">果</i></div>
<svg class="ico" style="left:1160px;top:698px" width="15" height="15" viewBox="0 0 15 15">
 <path d="M2.8 2.6 L12.6 12.4 M12.6 2.6 L2.8 12.4" stroke="#666" stroke-width="1.5" stroke-linecap="round"/>
</svg>
<!-- result content -->
<div class="abs" style="left:977px;top:724px;width:876px;height:68px;border-radius:0 0 8px 8px;background:#f7f7f7"></div>
<div class="t" style="left:991px;top:736px;font-size:12.5px;color:#8c8c8c">numRows =</div>
<div class="t" style="left:991px;top:761px;font-size:15px;color:#262626">3</div>
<div class="t" style="left:978px;top:813px;font-size:12.5px;color:#8c8c8c"><i class="c">输</i><i class="c">出</i></div>
<div class="abs" style="left:977px;top:837px;width:876px;height:40px;border-radius:8px;background:#f7f7f7"></div>
<div class="t" style="left:992px;top:854px;font-size:15.2px;color:#262626;font-family:'Liberation Mono',monospace">"PAHNAPLSIIGYIR"</div>
<!-- bottom scrollbar -->
<div class="abs" style="left:1875px;top:724px;width:17px;height:137px;background:#f7f7f7"></div>
<svg class="ico" style="left:1876px;top:729px" width="14" height="10" viewBox="0 0 14 10"><path d="M3.4 7.4 L7 3.4 L10.6 7.4 Z" fill="#505050"/></svg>
<div class="abs" style="left:1877px;top:815px;width:12px;height:46px;background:#c1c1c1"></div>
<!-- watermark -->
<div class="t" style="left:1754px;top:833px;font-size:18px;color:rgba(120,120,120,.75);font-family:'Liberation Serif',serif">@<i class="c">稀</i><i class="c">土</i><i class="c">掘</i><i class="c">金</i><i class="c">技</i><i class="c">术</i><i class="c">社</i><i class="c">区</i></div>

<!-- browser scrollbar -->
<svg class="ico" style="left:1905px;top:12px" width="13" height="9" viewBox="0 0 13 9"><path d="M2.6 6.8 L6.5 2.8 L10.4 6.8 Z" fill="#7c7c7c"/></svg>
<div class="abs" style="left:1905px;top:25px;width:13px;height:249px;background:#c1c1c1"></div>
<script>
(function(){try{var s=document.createElement('span');s.style.cssText='position:absolute;left:-9999px;top:0;font:100px "Liberation Sans",sans-serif;white-space:pre;visibility:hidden';s.textContent='\u5b57';document.body.appendChild(s);var w=s.getBoundingClientRect().width;document.body.removeChild(s);if(w<92){document.documentElement.className+=' nocjk';}}catch(e){}})();
</script>
</body></html>
